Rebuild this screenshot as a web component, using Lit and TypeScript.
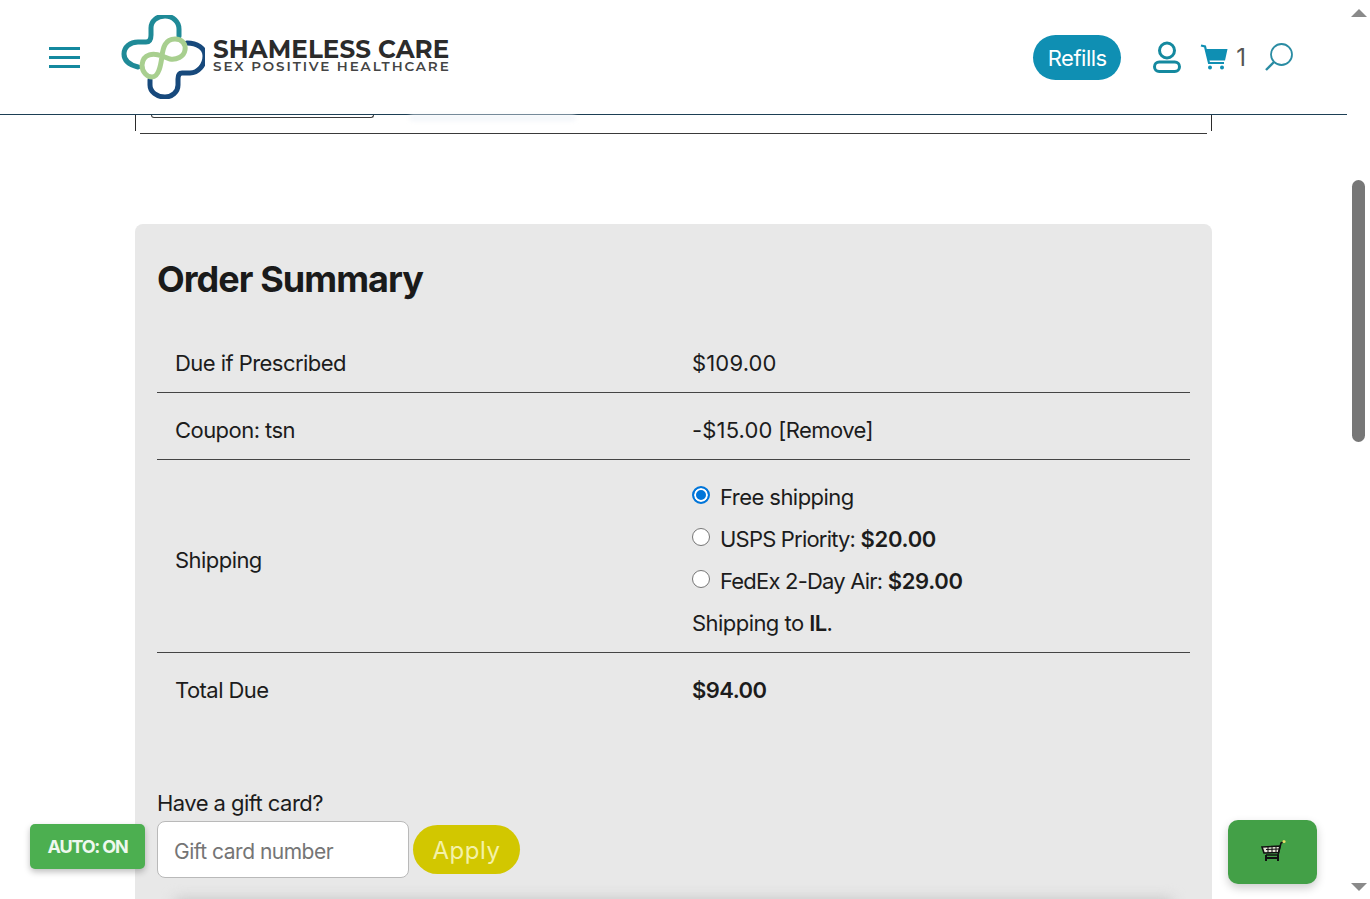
import { LitElement, html, css } from "lit";
import { customElement } from "lit/decorators.js";

const logo = html`<svg class="logo-mark" viewBox="11 10 84 84" fill="none" stroke-width="5" stroke-linecap="round">
  <path d="M28 62 C 20 60 14 56 14 49 C 14 42 20 37 28 37 L 36 37 C 40 37 41 34 41 30 L 41 23 C 41 16 47 11 55 11 C 63 11 69 17 69 24 L 69 31" stroke="#1f8a97"/>
  <path d="M77 38 C 87 38 95 43 95 51 C 95 60 88 68 80 68 L 72 68 C 69 68 68 71 68 74 L 68 80 C 68 87 62 92 55 92 C 47 92 40 87 40 80 L 40 75" stroke="#17497c"/>
  <path d="M52 51 C 53 43 55 34 65 34 C 72 34 76 39 75 45 C 74 52 66 55 60 54 L 52 51 C 44 48 33 48 32 60 C 32 67 37 72 42 72 C 49 72 51 59 52 51 Z" stroke="#a8cf8f"/>
</svg>`;

@customElement("app-root")
export class AppRoot extends LitElement {
  static styles = css`
    :host {
      display: block;
      font-family: "Inter", "Liberation Sans", sans-serif;
      color: #1c1c1c;
    }
    .window {
      display: flex;
      height: 899px;
      overflow: hidden;
      position: relative;
      background: #fff;
    }
    .page {
      flex: 1;
      min-width: 0;
    }
    .scrollbar {
      width: 23px;
      display: flex;
      flex-direction: column;
      align-items: center;
      justify-content: space-between;
      padding: 9px 5px 8px;
      box-sizing: border-box;
    }
    .track {
      flex: 1;
      width: 13px;
      padding-top: 163px;
    }
    .thumb {
      height: 262px;
      border-radius: 7px;
      background: #777;
    }
    .arrow-up,
    .arrow-down {
      width: 0;
      height: 0;
      border-left: 8px solid transparent;
      border-right: 8px solid transparent;
    }
    .arrow-up {
      border-bottom: 8px solid #8a8a8a;
    }
    .arrow-down {
      border-top: 8px solid #8a8a8a;
    }

    header {
      height: 115px;
      box-sizing: border-box;
      border-bottom: 1px solid #1d3f55;
      display: flex;
      align-items: center;
      padding: 0 53px 0 49px;
      background: #fff;
    }
    .burger {
      width: 31px;
      display: flex;
      flex-direction: column;
      gap: 6px;
      margin-right: 41px;
    }
    .burger span {
      height: 3px;
      background: #14899f;
    }
    .logo {
      display: flex;
      align-items: center;
      gap: 8px;
      margin-top: -1px;
    }
    .logo-mark {
      width: 84px;
      height: 84px;
    }
    .brand {
      font-family: "Montserrat", "Inter", sans-serif;
      color: #2b2b2b;
      margin-top: -1px;
    }
    .brand-top {
      font-size: 24.6px;
      line-height: 20px;
      font-weight: 700;
      letter-spacing: 0.1px;
      white-space: nowrap;
    }
    .brand-sub {
      font-size: 13.5px;
      line-height: 14px;
      font-weight: 600;
      letter-spacing: 1.9px;
      white-space: nowrap;
      color: #444;
    }
    .spacer {
      flex: 1;
    }
    .refills {
      background: #0f8fb3;
      color: #fff;
      width: 88px;
      height: 45px;
      border-radius: 23px;
      font-size: 22px;
      letter-spacing: -0.5px;
      display: flex;
      align-items: center;
      justify-content: center;
      padding-top: 2px;
      box-sizing: border-box;
      margin-right: 32px;
    }
    .icon-user {
      width: 28px;
      height: 32px;
      margin-right: 19px;
    }
    .icon-cart {
      width: 28px;
      height: 26px;
      margin-right: 8px;
    }
    .cart-count {
      font-size: 24px;
      color: #555;
      margin-right: 18px;
      font-weight: 400;
    }
    .icon-search {
      width: 30px;
      height: 30px;
    }

    .prev-card {
      margin-left: 135px;
      width: 1077px;
      height: 19px;
      display: flex;
      flex-direction: column;
    }
    .prev-sides {
      height: 16px;
      box-sizing: border-box;
      border-left: 1px solid #2b2b2b;
      border-right: 1px solid #2b2b2b;
      padding-left: 15px;
      display: flex;
      gap: 36px;
    }
    .prev-line {
      height: 1px;
      margin: 2px 5px 0;
      background: #3a3a3a;
    }
    .prev-btn {
      width: 223px;
      height: 3px;
      box-sizing: border-box;
      border: 1px solid #3a3a3a;
      border-top: 0;
      border-radius: 0 0 6px 6px;
    }
    .prev-ghost {
      width: 165px;
      height: 6px;
      background: #f3f6fa;
      filter: blur(2px);
    }

    .summary {
      width: 1077px;
      box-sizing: border-box;
      margin: 90px 0 0 135px;
      background: #e8e8e8;
      border-radius: 8px;
      padding: 33px 22px 0 22px;
      height: 700px;
      position: relative;
    }
    h2 {
      margin: 0;
      font-size: 36px;
      line-height: 44px;
      font-weight: 700;
      letter-spacing: -0.95px;
      color: #1a1a1a;
    }
    .rows {
      margin-top: 29px;
      display: grid;
      grid-template-columns: 535px 1fr;
    }
    .cell {
      border-bottom: 1px solid #444;
      font-size: 22px;
      letter-spacing: -0.55px;
      line-height: 42px;
      display: flex;
      flex-direction: column;
      justify-content: center;
      padding: 16px 0 8px;
    }
    .cell.first {
      padding: 12px 0 8px;
    }
    .cell.last {
      border-bottom: 0;
      padding: 16px 0 12px;
    }
    .cell.ship {
      padding: 16px 0 8px;
    }
    .cell.label {
      padding-left: 18px;
    }
    b {
      font-weight: 600;
    }
    .price {
      letter-spacing: 0.15px;
    }
    .tight {
      letter-spacing: -0.8px;
    }
    .radio-line {
      display: flex;
      align-items: center;
      gap: 10px;
    }
    .radio {
      width: 18px;
      height: 18px;
      box-sizing: border-box;
      border-radius: 50%;
      border: 1px solid #767676;
      background: #fff;
      margin-top: -4px;
    }
    .radio.on {
      border: 2px solid #0075d9;
      background: #0075d9;
      box-shadow: inset 0 0 0 2px #fff;
    }
    .radio + span b {
      letter-spacing: -0.3px;
    }
    .gift {
      margin: 66px 0 0 0;
    }
    .gift-label {
      font-size: 22px;
      letter-spacing: -0.55px;
      line-height: 28px;
      margin-bottom: 4px;
    }
    .gift-form {
      display: flex;
      align-items: center;
      gap: 4px;
    }
    .gift-input {
      width: 252px;
      height: 57px;
      box-sizing: border-box;
      background: #fff;
      border: 1px solid #b9b9b9;
      border-radius: 8px;
      color: #757575;
      font-size: 21px;
      display: flex;
      align-items: center;
      padding: 3px 0 0 16px;
      letter-spacing: -0.5px;
    }
    .apply {
      width: 107px;
      height: 49px;
      box-sizing: border-box;
      padding-top: 2px;
      border-radius: 25px;
      background: #d2c700;
      color: #f4f1a8;
      font-size: 24px;
      letter-spacing: 0.5px;
      display: flex;
      align-items: center;
      justify-content: center;
    }
    .next-shadow {
      position: absolute;
      left: 40px;
      right: 40px;
      top: 675px;
      height: 20px;
      background: #c4c4c4;
      filter: blur(7px);
    }

    .auto {
      position: absolute;
      left: 30px;
      top: 824px;
      width: 115px;
      height: 45px;
      border-radius: 5px;
      background: #4caf50;
      color: #eef8ee;
      font-size: 18px;
      font-weight: 700;
      letter-spacing: -1.2px;
      display: flex;
      align-items: center;
      justify-content: center;
      box-shadow: 0 3px 6px rgba(0, 0, 0, 0.25);
    }
    .fab {
      position: absolute;
      left: 1228px;
      top: 820px;
      width: 89px;
      height: 64px;
      border-radius: 10px;
      background: #43a047;
      display: flex;
      align-items: center;
      justify-content: center;
      box-shadow: 0 4px 10px rgba(0, 0, 0, 0.2);
    }
    .fab svg {
      width: 26px;
      height: 26px;
    }
  `;

  render() {
    return html`
      <div class="window">
        <div class="page">
          <header>
            <div class="burger"><span></span><span></span><span></span></div>
            <div class="logo">
              ${logo}
              <div class="brand">
                <div class="brand-top">SHAMELESS CARE</div>
                <div class="brand-sub">SEX POSITIVE HEALTHCARE</div>
              </div>
            </div>
            <div class="spacer"></div>
            <div class="refills">Refills</div>
            <svg class="icon-user" viewBox="0 0 28 32" fill="none" stroke="#14899f" stroke-width="3">
              <circle cx="14" cy="9.5" r="7.5" />
              <rect x="1.5" y="21" width="25" height="9.5" rx="4.75" />
            </svg>
            <svg class="icon-cart" viewBox="0 0 28 26">
              <path d="M1 1.5 L5 2.5 L9 19 L24 19" fill="none" stroke="#0f8fb3" stroke-width="2.2" />
              <path d="M6 5 L27.5 5 L25 16.5 L8.5 16.5 Z" fill="#0f8fb3" />
              <circle cx="10" cy="23.5" r="2" fill="#0f8fb3" />
              <circle cx="22" cy="23.5" r="2" fill="#0f8fb3" />
            </svg>
            <span class="cart-count">1</span>
            <svg class="icon-search" viewBox="0 0 30 30" fill="none" stroke="#2a8ca3" stroke-width="1.8">
              <circle cx="17.5" cy="12.5" r="10.5" />
              <path d="M10 20 L2 28" stroke-width="2.4" />
            </svg>
          </header>
          <div class="prev-card">
            <div class="prev-sides">
              <div class="prev-btn"></div>
              <div class="prev-ghost"></div>
            </div>
            <div class="prev-line"></div>
          </div>
          <section class="summary">
            <h2>Order Summary</h2>
            <div class="rows">
              <div class="cell label first">Due if Prescribed</div>
              <div class="cell first"><span class="price">$109.00</span></div>
              <div class="cell label">Coupon: tsn</div>
              <div class="cell"><span><span class="price">-$15.00</span> [Remove]</span></div>
              <div class="cell label">Shipping</div>
              <div class="cell ship">
                <div class="radio-line"><span class="radio on"></span><span>Free shipping</span></div>
                <div class="radio-line"><span class="radio"></span><span class="tight">USPS Priority: <b>$20.00</b></span></div>
                <div class="radio-line"><span class="radio"></span><span class="tight">FedEx 2-Day Air: <b>$29.00</b></span></div>
                <div>Shipping to <b>IL</b>.</div>
              </div>
              <div class="cell label last">Total Due</div>
              <div class="cell last"><b>$94.00</b></div>
            </div>
            <div class="gift">
              <div class="gift-label">Have a gift card?</div>
              <div class="gift-form">
                <div class="gift-input">Gift card number</div>
                <div class="apply">Apply</div>
              </div>
            </div>
            <div class="next-shadow"></div>
          </section>
        </div>
        <div class="scrollbar">
          <div class="arrow-up"></div>
          <div class="track"><div class="thumb"></div></div>
          <div class="arrow-down"></div>
        </div>
        <div class="auto">AUTO: ON</div>
        <div class="fab">
          <svg viewBox="0 0 26 26" fill="none" stroke="#111" stroke-width="1.6">
            <path d="M25 2 L21 4 L18 16 L6 16" />
            <path d="M2 8 L20 7 L18.5 13.5 L4 14 Z" fill="#e6e6d8" />
            <path d="M6 10.5 L19 10 M8 8 L8 14 M12 8 L12 14 M16 8 L16 14" stroke-width="1" />
            <path d="M6 16 L6 22 M18 16 L18 22 M5 19 L19 19" stroke-width="2" />
            <circle cx="24" cy="2.5" r="1.6" fill="#e6e36a" stroke="none" />
          </svg>
        </div>
      </div>
    `;
  }
}
